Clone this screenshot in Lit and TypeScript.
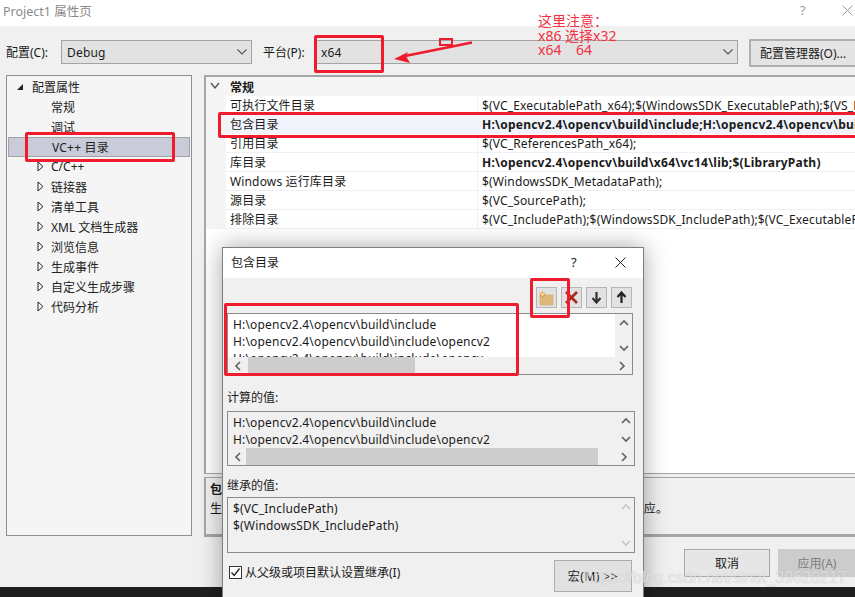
import { LitElement, html, css } from "lit";
import { customElement } from "lit/decorators.js";

const chevron = (dir: "up" | "down" | "left" | "right", color = "#606060") => {
  const pts = {
    up: "2,8 6,4 10,8",
    down: "2,4 6,8 10,4",
    left: "8,2 4,6 8,10",
    right: "4,2 8,6 4,10",
  }[dir];
  return html`<svg class="chev" width="12" height="12" viewBox="0 0 12 12"><polyline points=${pts} fill="none" stroke=${color} stroke-width="1.6"></polyline></svg>`;
};

const selectChevron = html`<svg class="sel-chev" width="12" height="8" viewBox="0 0 12 8"><polyline points="1.5,1.5 6,6 10.5,1.5" fill="none" stroke="#555" stroke-width="1.1"></polyline></svg>`;

const openTri = html`<svg class="tri" width="8" height="9" viewBox="0 0 8 9"><polygon points="1,7 7,7 7,1" fill="#222"></polygon></svg>`;
const closedTri = html`<svg class="tri" width="7" height="11" viewBox="0 0 7 11"><polygon points="1,1 6,5.5 1,10" fill="#fff" stroke="#222" stroke-width="1"></polygon></svg>`;

const treeItems: { t: string; kind: "root" | "leaf" | "closed"; sel?: boolean }[] = [
  { t: "配置属性", kind: "root" },
  { t: "常规", kind: "leaf" },
  { t: "调试", kind: "leaf" },
  { t: "VC++ 目录", kind: "leaf", sel: true },
  { t: "C/C++", kind: "closed" },
  { t: "链接器", kind: "closed" },
  { t: "清单工具", kind: "closed" },
  { t: "XML 文档生成器", kind: "closed" },
  { t: "浏览信息", kind: "closed" },
  { t: "生成事件", kind: "closed" },
  { t: "自定义生成步骤", kind: "closed" },
  { t: "代码分析", kind: "closed" },
];

const gridRows: { n: string; v: string; bold?: boolean; hi?: boolean }[] = [
  { n: "可执行文件目录", v: "$(VC_ExecutablePath_x64);$(WindowsSDK_ExecutablePath);$(VS_ExecutablePath);$(MSBuild_ExecutablePath)" },
  { n: "包含目录", v: "H:\\opencv2.4\\opencv\\build\\include;H:\\opencv2.4\\opencv\\build\\include\\opencv2;H:\\opencv2.4", bold: true, hi: true },
  { n: "引用目录", v: "$(VC_ReferencesPath_x64);" },
  { n: "库目录", v: "H:\\opencv2.4\\opencv\\build\\x64\\vc14\\lib;$(LibraryPath)", bold: true },
  { n: "Windows 运行库目录", v: "$(WindowsSDK_MetadataPath);" },
  { n: "源目录", v: "$(VC_SourcePath);" },
  { n: "排除目录", v: "$(VC_IncludePath);$(WindowsSDK_IncludePath);$(VC_ExecutablePath_x64);$(VC_LibraryPath)" },
];

@customElement("app-root")
export class AppRoot extends LitElement {
  static styles = css`
    :host {
      display: block;
      width: 855px;
      height: 597px;
      overflow: hidden;
      position: relative;
      font-family: "Noto Sans", "Noto Sans CJK SC", sans-serif;
      font-size: 12px;
      color: #1a1a1a;
    }
    .win { width: 855px; height: 597px; display: flex; flex-direction: column; background: #f0f0f0; }
    .titlebar { height: 26px; background: #fff; display: flex; align-items: center; padding: 0 0 6px 3px; box-sizing: border-box; color: #8a8a8a; font-size: 12.5px; }
    .titlebar .t { flex: 1; }
    .titlebar .q { width: 42px; font-size: 13px; color: #999; }
    .titlebar svg { margin-right: 2px; }
    .toolbar { height: 49px; display: flex; align-items: center; padding: 3px 0 0 6px; box-sizing: border-box; }
    .lbl { white-space: nowrap; flex: none; }
    .lbl-a { width: 44px; }
    .lbl-b { width: 41px; margin-left: 11px; }
    .sel { height: 24px; box-sizing: border-box; border: 1px solid #a3a3a3; background: #e2e2e2; display: flex; align-items: center; justify-content: space-between; padding: 0 3px 0 5px; letter-spacing: .2px; }
    .sel-a { width: 191px; margin-left: 11px; }
    .sel-b { width: 423px; margin-left: 11px; }
    .tbtn { height: 28px; width: 106px; margin: 2px 0 0 11px; box-sizing: border-box; border: 2px solid #b0b0b0; border-right: 0; background: #e4e4e4; padding-left: 9px; display: flex; align-items: center; white-space: nowrap; }
    .main { display: flex; height: 512px; padding-left: 6px; }
    .tree { width: 186px; box-sizing: border-box; border: 1px solid #8d8d93; background: #f5f5f5; padding: 1px 1px 0; height: 461px; flex: none; }
    .titem { height: 20px; box-sizing: border-box; display: flex; align-items: center; position: relative; white-space: nowrap; color: #222; padding-bottom: 1px; }
    .titem.root { padding-left: 24px; padding-bottom: 0; }
    .titem.leaf, .titem.closed { padding-left: 43px; }
    .titem.sel { background: #c9cbd9; }
    .tri { position: absolute; }
    .titem.root .tri { left: 8px; }
    .titem.closed .tri { left: 29px; }
    .right { margin-left: 12px; width: 651px; display: flex; flex-direction: column; flex: none; }
    .grid { height: 399px; flex: none; box-sizing: border-box; background: #fff; border-top: 2px solid #a6a6a6; border-left: 2px solid #a6a6a6; border-bottom: 1px solid #a6a6a6; overflow: hidden; }
    .ghead { height: 19px; background: #f5f5f5; display: flex; align-items: center; font-weight: 700; position: relative; padding-left: 24px; }
    .ghead svg { position: absolute; left: 3px; top: 4px; }
    .grow { height: 19px; display: flex; box-sizing: border-box; border-bottom: 1px solid #eef0f4; }
    .gutter { width: 20px; background: #f5f5f5; flex: none; margin-bottom: -1px; }
    .gname { width: 252px; flex: none; box-sizing: border-box; padding-left: 4px; display: flex; align-items: center; border-right: 1px solid #eef0f4; white-space: nowrap; letter-spacing: .15px; }
    .gval { padding-left: 4px; display: flex; align-items: center; white-space: nowrap; letter-spacing: .15px; }
    .grow.hi { background: #f1f4fa; }
    .grow.bold .gval { font-weight: 700; letter-spacing: .23px; }
    .desc { margin-top: 3px; height: 60px; flex: none; box-sizing: border-box; border: 2px solid #a6a6a6; border-top-width: 1px; border-right: 0; border-bottom-width: 3px; padding: 2px 0 0 4px; background: #f0f0f0; white-space: nowrap; }
    .desc b { display: block; height: 19px; line-height: 19px; }
    .desc span { display: block; height: 19px; line-height: 19px; letter-spacing: .42px; }
    .footer { height: 50px; flex: none; display: flex; justify-content: flex-end; padding-top: 12px; box-sizing: border-box; }
    .fbtn { height: 28px; box-sizing: border-box; border: 1px solid #a8a8a8; background: #e6e6e6; display: flex; align-items: center; justify-content: center; }
    .fbtn.cancel { width: 86px; margin-right: 8px; }
    .fbtn.apply { width: 77px; background: #ccc; border-color: #ccc; border-right: 0; color: #7c7c7c; }
    .dark { height: 10px; background: #1f1f1f; flex: none; }

    .modal { position: absolute; left: 222px; top: 247px; width: 422px; height: 360px; box-sizing: border-box; border: 1px solid #7e7e7e; background: #f0f0f0; box-shadow: 0 0 22px rgba(0,0,0,.35); display: flex; flex-direction: column; }
    .mhead { height: 30px; flex: none; background: #fff; display: flex; align-items: center; padding: 0 0 2px 8px; box-sizing: border-box; }
    .mhead .t { flex: 1; }
    .mhead .q { width: 44px; font-size: 13px; }
    .mhead svg { margin-right: 17px; }
    .mbody { padding: 9px 9px 0 4px; display: flex; flex-direction: column; }
    .mtools { display: flex; justify-content: flex-end; gap: 4px; height: 21px; margin-right: 2px; }
    .mtool { width: 21px; height: 21px; box-sizing: border-box; border: 1px solid #b5b5b5; background: #e2e2e2; display: flex; align-items: center; justify-content: center; }
    .list { box-sizing: border-box; border: 1px solid #8a8a8a; background: #f0f0f0; display: flex; flex-direction: column; width: 406px; overflow: hidden; flex: none; }
    .list.w2 { width: 408px; }
    .l1 { margin-top: 5px; height: 62px; }
    .l2 { height: 55px; margin-top: 3px; }
    .l3 { height: 56px; margin-top: 1px; }
    .lmain { flex: 1; display: flex; min-height: 0; }
    .lines { flex: 1; background: #fff; padding: 2px 0 0 5px; overflow: hidden; white-space: nowrap; letter-spacing: .18px; }
    .lines.ro { background: #f0f0f0; }
    .line { height: 17px; line-height: 17px; }
    .vbar { width: 17px; flex: none; display: flex; flex-direction: column; justify-content: space-between; align-items: center; padding: 3px 0; box-sizing: border-box; }
    .hbar { height: 17px; flex: none; display: flex; align-items: center; }
    .hbar .arrow { width: 20px; flex: none; display: flex; justify-content: center; }
    .thumb { height: 17px; background: #cdcdcd; }
    .track { flex: 1; }
    .sec { height: 22px; margin-top: 8px; display: flex; align-items: center; flex: none; }
    .sec.first { margin-top: 11px; }
    .bottom { display: flex; justify-content: space-between; margin-top: 7px; }
    .check { display: flex; align-items: center; gap: 3px; height: 24px; padding-left: 2px; white-space: nowrap; }
    .box { width: 13px; height: 13px; box-sizing: border-box; border: 1px solid #333; background: #fff; display: flex; }
    .macro { width: 78px; height: 32px; box-sizing: border-box; border: 1px solid #adadad; background: #e1e1e1; display: flex; align-items: center; justify-content: center; margin-right: 2px; letter-spacing: .5px; }

    .mark { position: absolute; border: 3px solid #ee1c2c; border-radius: 2px; box-sizing: border-box; pointer-events: none; }
    .m1 { left: 314px; top: 35px; width: 70px; height: 38px; }
    .m2 { left: 25px; top: 132px; width: 150px; height: 30px; }
    .m3 { left: 218px; top: 112px; width: 660px; height: 26px; }
    .m4 { left: 224px; top: 303px; width: 295px; height: 73px; }
    .m5 { left: 530px; top: 278px; width: 40px; height: 40px; }
    .m6 { left: 439px; top: 38px; width: 14px; height: 8px; border-width: 2px; border-radius: 0; }
    .arrowsvg { position: absolute; left: 385px; top: 30px; }
    .note { position: absolute; left: 538px; top: 14px; color: #f2313f; font-size: 14px; line-height: 14.5px; white-space: pre; }
    .wm { position: absolute; left: 585px; top: 569px; color: rgba(255,255,255,.62); font-family: "Liberation Sans", sans-serif; font-size: 16px; white-space: nowrap; text-shadow: 0 0 1px rgba(120,120,120,.45); }
  `;

  private list(cls: string, lines: string[], thumbLeft: number, thumbW: number, ro: boolean, hbar: boolean) {
    const c = ro && !hbar ? "#c4c4c4" : "#606060";
    return html`<div class="list ${cls}">
      <div class="lmain">
        <div class="lines ${ro ? "ro" : ""}">${lines.map((l) => html`<div class="line">${l}</div>`)}</div>
        <div class="vbar">${chevron("up", c)}${chevron("down", c)}</div>
      </div>
      ${hbar
        ? html`<div class="hbar"><div class="arrow">${chevron("left")}</div><div class="thumb" style="margin-left:${thumbLeft}px;width:${thumbW}px"></div><div class="track"></div><div class="arrow">${chevron("right")}</div></div>`
        : ""}
    </div>`;
  }

  render() {
    const inc = "H:\\opencv2.4\\opencv\\build\\include";
    return html`
      <div class="win">
        <div class="titlebar">
          <span class="t">Project1 属性页</span>
          <span class="q">?</span>
          <svg width="11" height="11" viewBox="0 0 11 11"><path d="M.5.5l10 10M10.5.5l-10 10" stroke="#9a9a9a" fill="none"></path></svg>
        </div>
        <div class="toolbar">
          <span class="lbl lbl-a">配置(C):</span>
          <div class="sel sel-a"><span>Debug</span>${selectChevron}</div>
          <span class="lbl lbl-b">平台(P):</span>
          <div class="sel sel-b"><span>x64</span>${selectChevron}</div>
          <div class="tbtn">配置管理器(O)...</div>
        </div>
        <div class="main">
          <div class="tree">
            ${treeItems.map(
              (i) => html`<div class="titem ${i.kind} ${i.sel ? "sel" : ""}">
                ${i.kind === "root" ? openTri : i.kind === "closed" ? closedTri : ""}${i.t}
              </div>`
            )}
          </div>
          <div class="right">
            <div class="grid">
              <div class="ghead">
                <svg width="12" height="10" viewBox="0 0 12 10"><polyline points="2,2 6,7 10,2" fill="none" stroke="#555" stroke-width="1.4"></polyline></svg>
                常规
              </div>
              ${gridRows.map(
                (r) => html`<div class="grow ${r.bold ? "bold" : ""} ${r.hi ? "hi" : ""}">
                  <div class="gutter"></div>
                  <div class="gname">${r.n}</div>
                  <div class="gval">${r.v}</div>
                </div>`
              )}
            </div>
            <div class="desc">
              <b>包含目录</b>
              <span>生成 VC++ 项目期间，搜索包含文件时使用的路径。与环境变量 INCLUDE 相对应。</span>
            </div>
            <div class="footer">
              <div class="fbtn cancel">取消</div>
              <div class="fbtn apply">应用(A)</div>
            </div>
          </div>
        </div>
        <div style="flex:1"></div>
        <div class="dark"></div>
      </div>

      <div class="modal">
        <div class="mhead">
          <span class="t">包含目录</span>
          <span class="q">?</span>
          <svg width="11" height="11" viewBox="0 0 11 11"><path d="M.5.5l10 10M10.5.5l-10 10" stroke="#222" fill="none"></path></svg>
        </div>
        <div class="mbody">
          <div class="mtools">
            <div class="mtool">
              <svg width="19" height="19" viewBox="0 0 19 19">
                <path d="M3 7h13v10H3z" fill="#dcb87c" stroke="#d2ad72" stroke-width=".6"></path>
                <path d="M5.5 3.5v6M2.5 6.5h6M3.4 4.4l4.2 4.2M7.6 4.4L3.4 8.6" stroke="#e0901c" stroke-width="1"></path>
                <circle cx="5.5" cy="6.5" r="1.2" fill="#fff2c8"></circle>
              </svg>
            </div>
            <div class="mtool">
              <svg width="15" height="15" viewBox="0 0 15 15"><path d="M2 2l11 11M13 2L2 13" stroke="#a8281e" stroke-width="2.6"></path></svg>
            </div>
            <div class="mtool">
              <svg width="11" height="13" viewBox="0 0 11 13"><path d="M5.5 1v10M1.5 7l4 4.5 4-4.5" stroke="#333" stroke-width="2.2" fill="none"></path></svg>
            </div>
            <div class="mtool">
              <svg width="11" height="13" viewBox="0 0 11 13"><path d="M5.5 12V2M1.5 6l4-4.5 4 4.5" stroke="#222" stroke-width="2.2" fill="none"></path></svg>
            </div>
          </div>
          ${this.list("l1", [inc, inc + "\\opencv2", inc + "\\opencv"], 0, 167, false, true)}
          <div class="sec first">计算的值:</div>
          ${this.list("l2 w2", [inc, inc + "\\opencv2"], -2, 352, true, true)}
          <div class="sec">继承的值:</div>
          ${this.list("l3 w2", ["$(VC_IncludePath)", "$(WindowsSDK_IncludePath)"], 0, 0, true, false)}
          <div class="bottom">
            <div class="check">
              <span class="box"><svg width="11" height="11" viewBox="0 0 11 11"><polyline points="1.5,5.5 4.2,8.5 9.5,1.5" fill="none" stroke="#222" stroke-width="1.3"></polyline></svg></span>
              从父级或项目默认设置继承(I)
            </div>
            <div class="macro">宏(M) &gt;&gt;</div>
          </div>
        </div>
      </div>

      <div class="mark m1"></div>
      <div class="mark m2"></div>
      <div class="mark m3"></div>
      <div class="mark m4"></div>
      <div class="mark m5"></div>
      <div class="mark m6"></div>
      <svg class="arrowsvg" width="95" height="40" viewBox="0 0 95 40">
        <path d="M87 12.5L20 26" stroke="#ee1c2c" stroke-width="2.6" fill="none"></path>
        <polygon points="9,29 23,22 21,26 25,33" fill="#ee1c2c"></polygon>
      </svg>
      <div class="note">这里注意：
x86 选择x32
x64    64</div>
      <div class="wm">https://blog.csdn.net/sinat_39620217</div>
    `;
  }
}
